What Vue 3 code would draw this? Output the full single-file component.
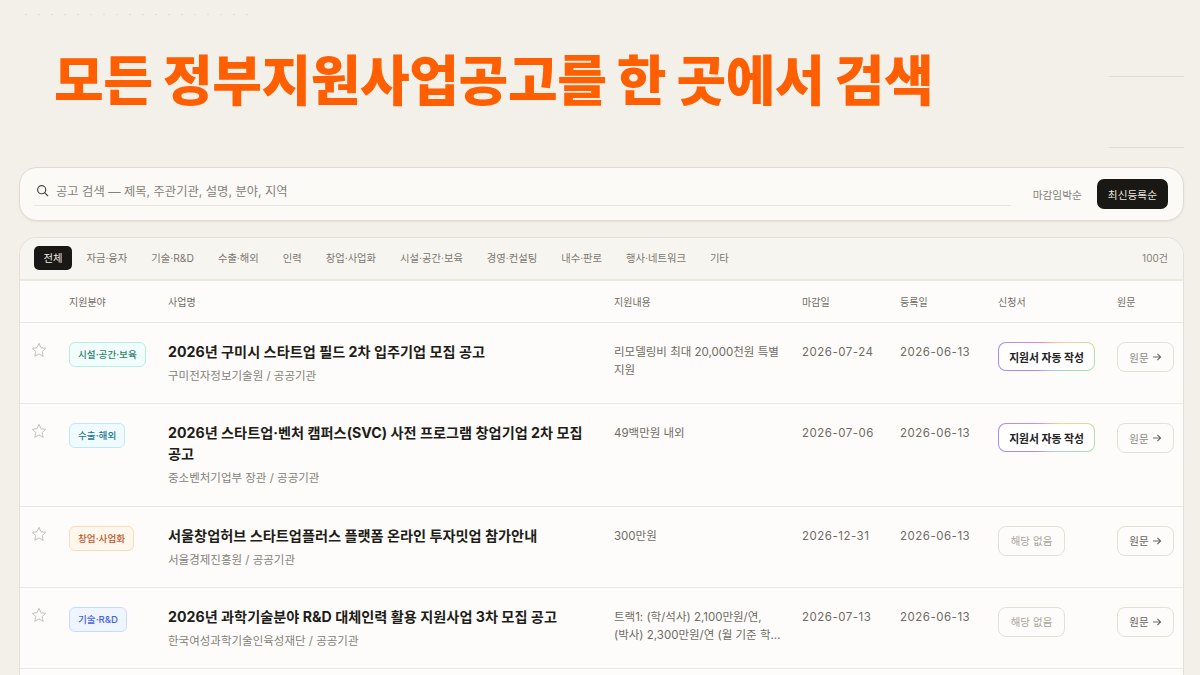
<script setup>
const filters = ['전체', '자금·융자', '기술·R&D', '수출·해외', '인력', '창업·사업화', '시설·공간·보육', '경영·컨설팅', '내수·판로', '행사·네트워크', '기타']

const columns = ['', '지원분야', '사업명', '지원내용', '마감일', '등록일', '신청서', '원문']

const rows = [
  {
    tag: '시설·공간·보육',
    tone: 'mint',
    title: '2026년 구미시 스타트업 필드 2차 입주기업 모집 공고',
    org: '구미전자정보기술원 / 공공기관',
    support: '리모델링비 최대 20,000천원 특별 지원',
    deadline: '2026-07-24',
    created: '2026-06-13',
    canApply: true,
  },
  {
    tag: '수출·해외',
    tone: 'sky',
    title: '2026년 스타트업·벤처 캠퍼스(SVC) 사전 프로그램 창업기업 2차 모집 공고',
    org: '중소벤처기업부 장관 / 공공기관',
    support: '49백만원 내외',
    deadline: '2026-07-06',
    created: '2026-06-13',
    canApply: true,
  },
  {
    tag: '창업·사업화',
    tone: 'orange',
    title: '서울창업허브 스타트업플러스 플랫폼 온라인 투자밋업 참가안내',
    org: '서울경제진흥원 / 공공기관',
    support: '300만원',
    deadline: '2026-12-31',
    created: '2026-06-13',
    canApply: false,
  },
  {
    tag: '기술·R&D',
    tone: 'blue',
    title: '2026년 과학기술분야 R&D 대체인력 활용 지원사업 3차 모집 공고',
    org: '한국여성과학기술인육성재단 / 공공기관',
    support: '트랙1: (학/석사) 2,100만원/연, (박사) 2,300만원/연 (월 기준 학…',
    deadline: '2026-07-13',
    created: '2026-06-13',
    canApply: false,
  },
]
</script>

<template>
  <div class="page">
    <div class="top-strip"></div>

    <header class="hero">
      <h1 class="hero-title">모든 정부지원사업공고를 한 곳에서 검색</h1>
      <div class="hero-rules"></div>
    </header>

    <section class="search-card">
      <label class="search-field">
        <svg class="search-icon" viewBox="0 0 16 16" aria-hidden="true">
          <circle cx="7" cy="7" r="5" />
          <line x1="10.6" y1="10.6" x2="14.4" y2="14.4" />
        </svg>
        <span>공고 검색 — 제목, 주관기관, 설명, 분야, 지역</span>
      </label>
      <div class="sort">
        <button class="sort-btn">마감임박순</button>
        <button class="sort-btn active">최신등록순</button>
      </div>
    </section>

    <section class="table-card">
      <div class="filter-bar">
        <div class="filters">
          <button
            v-for="(filter, index) in filters"
            :key="filter"
            class="filter"
            :class="{ active: index === 0 }"
          >
            {{ filter }}
          </button>
        </div>
        <span class="count">100건</span>
      </div>

      <div class="grid-row head">
        <div v-for="col in columns" :key="col">{{ col }}</div>
      </div>

      <div v-for="row in rows" :key="row.title" class="grid-row item">
        <div class="star">
          <svg viewBox="0 0 16 16" aria-hidden="true">
            <path d="M8 1.3l2 4.5 4.8.5-3.6 3.2 1 4.8L8 11.9l-4.2 2.4 1-4.8L1.2 6.3 6 5.8z" />
          </svg>
        </div>
        <div><span class="tag" :class="row.tone">{{ row.tag }}</span></div>
        <div class="name">
          <div class="title">{{ row.title }}</div>
          <div class="org">{{ row.org }}</div>
        </div>
        <div class="support">{{ row.support }}</div>
        <div class="date">{{ row.deadline }}</div>
        <div class="date">{{ row.created }}</div>
        <div>
          <button v-if="row.canApply" class="apply">지원서 자동 작성</button>
          <button v-else class="no-apply">해당 없음</button>
        </div>
        <div>
          <button class="source" :class="{ muted: row.canApply }">
            원문
            <svg viewBox="0 0 10 10" aria-hidden="true">
              <path d="M1 5h7.4M5.4 1.8L8.6 5 5.4 8.2" />
            </svg>
          </button>
        </div>
      </div>

      <div class="grid-row item tail"></div>
    </section>
  </div>
</template>

<style>
html,
body {
  margin: 0;
  background: #f3f0ea;
}
</style>

<style scoped>
.page {
  box-sizing: border-box;
  width: 1200px;
  height: 675px;
  overflow: hidden;
  padding: 0 16px 0 19px;
  background: #f3f0ea;
  font-family: Inter, "Noto Sans CJK KR", sans-serif;
  color: #1c1a16;
}

button {
  font-family: inherit;
  cursor: pointer;
}

.top-strip {
  height: 1px;
  width: 225px;
  margin-left: 6px;
  padding-top: 14px;
  background-clip: content-box;
  background-image: repeating-linear-gradient(90deg, #e2ded5 0 2px, transparent 2px 13px);
}

.hero {
  display: flex;
  justify-content: space-between;
  height: 152px;
}

.hero-title {
  margin: 30px 0 0 35px;
  font-size: 54px;
  line-height: 74px;
  font-weight: 900;
  letter-spacing: -0.4px;
  color: #ff5f00;
  white-space: nowrap;
}

.hero-rules {
  box-sizing: border-box;
  width: 75px;
  height: 72px;
  margin-top: 61px;
  border-top: 1px solid #e0dcd2;
  border-bottom: 1px solid #e0dcd2;
}

.search-card {
  box-sizing: border-box;
  display: flex;
  align-items: center;
  gap: 11px;
  height: 54px;
  padding: 0 15px 0 14px;
  border: 1px solid #e0dcd2;
  border-radius: 18px;
  background: #fbfaf7;
  box-shadow: 0 1px 2px rgba(60, 50, 30, 0.08);
}

.search-field {
  flex: 1;
  display: flex;
  align-items: center;
  gap: 7px;
  height: 28px;
  margin-bottom: 6px;
  padding-left: 2px;
  border-bottom: 1.5px solid #e9e6df;
  font-size: 12.3px;
  color: #85817a;
}

.search-icon {
  width: 13px;
  height: 13px;
  fill: none;
  stroke: #4d4a44;
  stroke-width: 1.5;
  stroke-linecap: round;
}

.sort {
  display: flex;
  align-items: center;
  gap: 4px;
}

.sort-btn {
  height: 30px;
  padding: 0 11px;
  border: 0;
  border-radius: 7px;
  background: transparent;
  font-size: 10.7px;
  color: #85817a;
}

.sort-btn.active {
  background: #1a1814;
  color: #e9e6df;
}

.table-card {
  margin-top: 16px;
  border: 1px solid #e4e0d6;
  border-bottom: 0;
  border-radius: 18px 18px 0 0;
  background: #fdfcfa;
  overflow: hidden;
}

.filter-bar {
  display: flex;
  align-items: center;
  justify-content: space-between;
  height: 41px;
  padding: 0 15px 0 14px;
  border-bottom: 2px solid #ece9e1;
  background: #f7f5f0;
}

.filters {
  display: flex;
  align-items: center;
  gap: 5px;
  margin-bottom: 2px;
}

.filter {
  height: 24px;
  padding: 0 9.5px;
  border: 0;
  border-radius: 5px;
  background: transparent;
  font-size: 10.3px;
  color: #7c7870;
  white-space: nowrap;
}

.filter.active {
  background: #1a1814;
  color: #efece5;
}

.count {
  margin-bottom: 2px;
  font-size: 10px;
  color: #85817a;
}

.grid-row {
  display: grid;
  grid-template-columns: 49px 99px 446px 188px 98px 98px 119px 1fr;
}

.head {
  align-items: center;
  height: 40px;
  padding-bottom: 1px;
  border-bottom: 1.5px solid #ece9e1;
  font-size: 10px;
  color: #6f6b64;
}

.item {
  padding-top: 19px;
  padding-bottom: 18.25px;
  border-bottom: 1.5px solid #ede9e2;
}

.tail {
  height: 40px;
  border-bottom: 0;
}

.star {
  padding-left: 11px;
}

.star svg {
  display: block;
  width: 16px;
  height: 16px;
  fill: none;
  stroke: #c4c1ba;
  stroke-width: 1;
}

.tag {
  display: inline-block;
  box-sizing: border-box;
  height: 25px;
  padding: 0 8px;
  border: 1px solid;
  border-radius: 6px;
  font-size: 9.6px;
  line-height: 23px;
  font-weight: 500;
  white-space: nowrap;
}

.tag.mint {
  border-color: #b4efe4;
  background: #f0fdfa;
  color: #2f7f72;
}

.tag.sky {
  border-color: #bde9f7;
  background: #f0fbff;
  color: #24768f;
}

.tag.orange {
  border-color: #fbdcbc;
  background: #fff6ec;
  color: #c2572a;
}

.tag.blue {
  border-color: #c9dbfc;
  background: #eff5ff;
  color: #3f63dc;
}

.name {
  margin-top: -1px;
  padding-right: 26px;
}

.title {
  font-size: 14.2px;
  line-height: 21px;
  font-weight: 700;
  word-break: keep-all;
  color: #1f1d19;
}

.org {
  margin-top: 6px;
  font-size: 11.5px;
  line-height: 17px;
  color: #85817a;
}

.support {
  margin-top: 1px;
  padding-right: 18px;
  font-size: 11.5px;
  line-height: 18px;
  word-break: keep-all;
  color: #6f6b64;
}

.date {
  margin-top: 1px;
  font-size: 11.5px;
  line-height: 18px;
  letter-spacing: 0.5px;
  color: #6f6b64;
}

.apply {
  display: block;
  box-sizing: border-box;
  width: 97px;
  height: 29px;
  padding: 0;
  border: 1.5px solid transparent;
  border-radius: 8px;
  background:
    linear-gradient(#fff, #fff) padding-box,
    conic-gradient(from 280deg, #a78bfa, #f58fb0 60deg, #fbd38d 130deg, #a8e6a1 175deg, #a5c8f8 240deg, #a78bfa 300deg) border-box;
  font-size: 10.8px;
  font-weight: 700;
  color: #24221e;
}

.no-apply {
  display: block;
  box-sizing: border-box;
  width: 67px;
  height: 30px;
  padding: 0;
  border: 1px solid #e4e0d6;
  border-radius: 8px;
  background: #fdfcfa;
  font-size: 10.5px;
  color: #a9a59c;
}

.source {
  display: flex;
  align-items: center;
  justify-content: center;
  gap: 3px;
  box-sizing: border-box;
  width: 57px;
  height: 30px;
  padding: 0;
  border: 1px solid #e4e0d6;
  border-radius: 8px;
  background: #fdfcfa;
  font-size: 10.5px;
  color: #66625b;
}

.source.muted {
  color: #8f8b83;
}

.source svg {
  width: 10px;
  height: 10px;
  fill: none;
  stroke: #6f6b64;
  stroke-width: 1.2;
}
</style>
